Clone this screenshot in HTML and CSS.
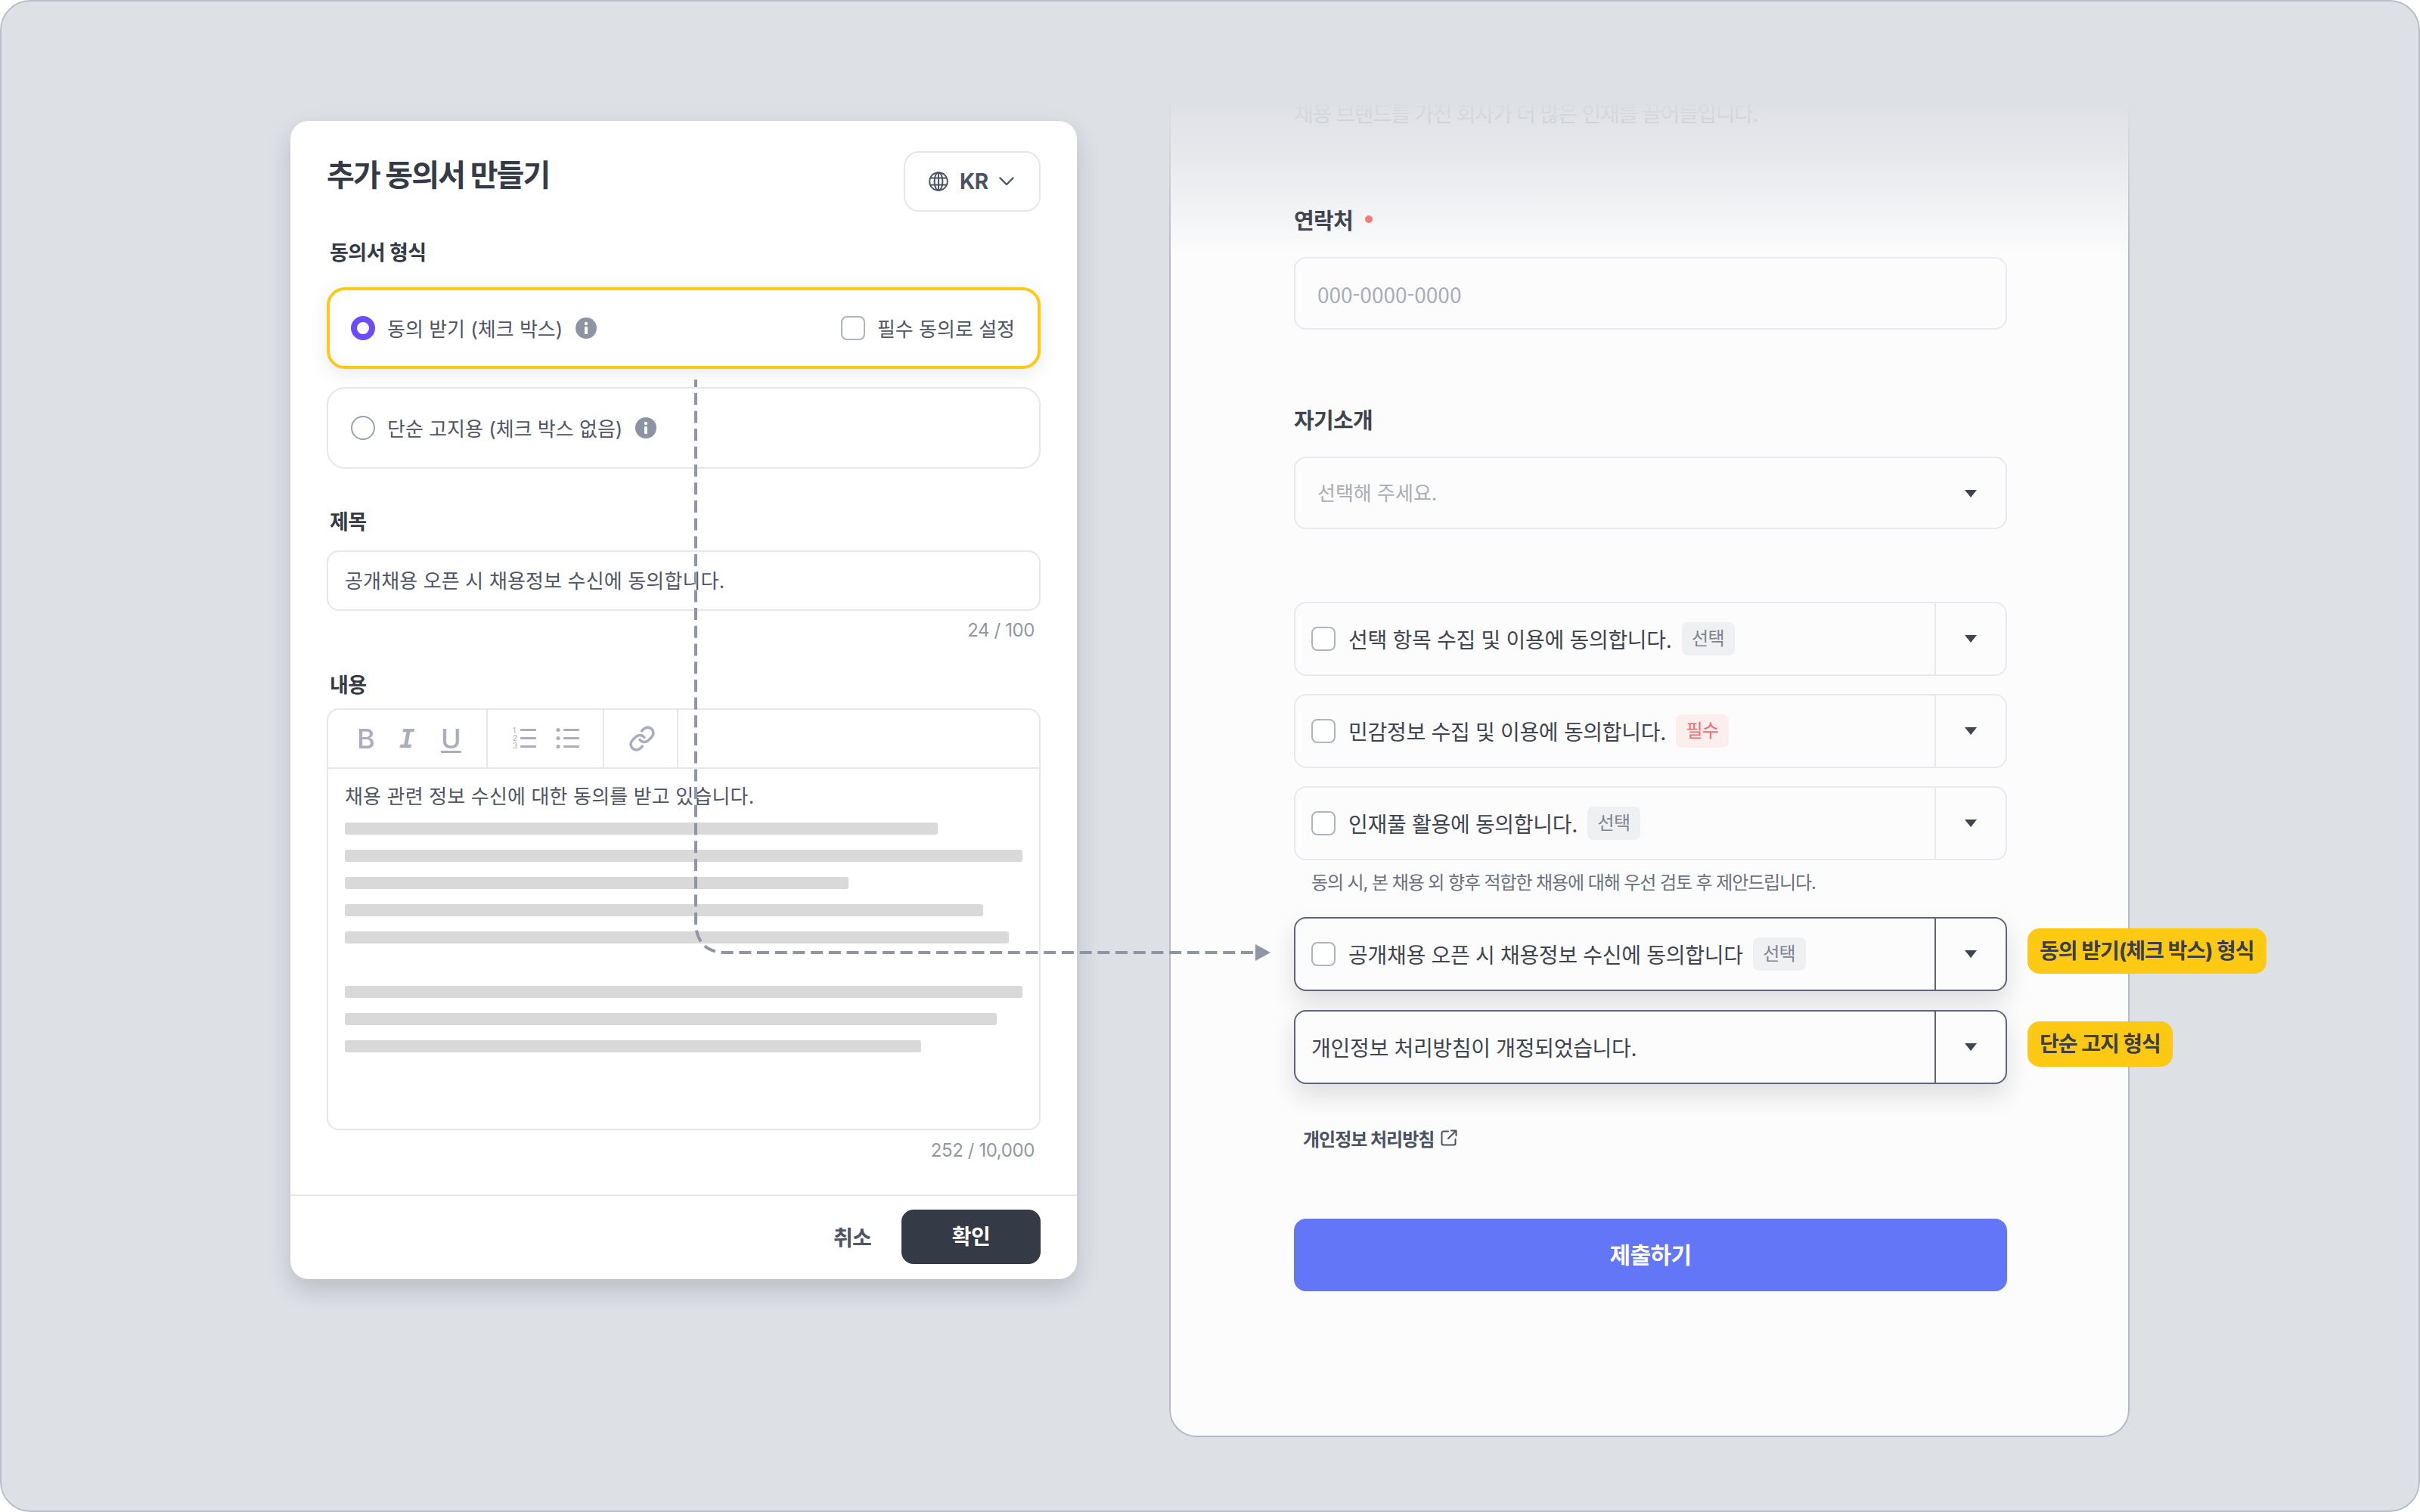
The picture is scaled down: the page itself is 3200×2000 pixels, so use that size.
FILE: index.html
```html
<!DOCTYPE html>
<html lang="ko">

<head>
  <meta charset="UTF-8" />
  <title>추가 동의서 만들기</title>
  <link rel="stylesheet" href="styles.css">
</head>

<body>
  <div class="frame">

    <!-- left: dialog -->
    <div class="dialog">
      <div class="dialog-head">
        <h1 class="dialog-title">추가 동의서 만들기</h1>
        <div class="lang-btn">
          <svg class="globe" viewBox="0 0 26 26" fill="none" stroke="#4b5263" stroke-width="2">
            <circle cx="13" cy="13" r="11.8" />
            <ellipse cx="13" cy="13" rx="5.4" ry="11.8" />
            <path d="M3 8.5h20M3 17.5h20M13 1.2v23.6" />
          </svg>
          <span>KR</span>
          <svg class="chevron" viewBox="0 0 20 12" fill="none" stroke="#4b5263" stroke-width="2.4" stroke-linecap="round" stroke-linejoin="round">
            <path d="M1.5 1.5L10 10l8.5-8.5" />
          </svg>
        </div>
      </div>

      <div class="form-label label-format">동의서 형식</div>
      <div class="option option-active">
        <span class="radio radio-on"></span>
        <span class="option-text">동의 받기 (체크 박스)</span>
        <svg class="info" viewBox="0 0 28 28">
          <circle cx="14" cy="14" r="14" fill="#8c93a3" />
          <circle cx="14" cy="8" r="2.2" fill="#fff" />
          <rect x="12" y="12" width="4" height="10" rx="1" fill="#fff" />
        </svg>
        <span class="option-right">
          <span class="check"></span>
          <span class="option-text">필수 동의로 설정</span>
        </span>
      </div>
      <div class="option">
        <span class="radio"></span>
        <span class="option-text">단순 고지용 (체크 박스 없음)</span>
        <svg class="info" viewBox="0 0 28 28">
          <circle cx="14" cy="14" r="14" fill="#8c93a3" />
          <circle cx="14" cy="8" r="2.2" fill="#fff" />
          <rect x="12" y="12" width="4" height="10" rx="1" fill="#fff" />
        </svg>
      </div>

      <div class="form-label label-title">제목</div>
      <div class="title-input">공개채용 오픈 시 채용정보 수신에 동의합니다.</div>
      <div class="counter counter-title">24 / 100</div>

      <div class="form-label label-body">내용</div>
      <div class="editor">
        <div class="toolbar">
          <div class="tool-group group-text">
            <span class="tool-b">B</span>
            <span class="tool-i">I</span>
            <span class="tool-u">U</span>
          </div>
          <div class="tool-group group-list">
            <svg class="list-icon" viewBox="0 0 32 32" fill="#aaadbb">
              <text x="0" y="9" class="list-num">1</text>
              <text x="0" y="19" class="list-num">2</text>
              <text x="0" y="29" class="list-num">3</text>
              <rect x="10" y="3" width="21" height="3" rx="1" />
              <rect x="10" y="14" width="21" height="3" rx="1" />
              <rect x="10" y="25" width="21" height="3" rx="1" />
            </svg>
            <svg class="list-icon" viewBox="0 0 32 32" fill="#aaadbb">
              <circle cx="3" cy="4.5" r="2.5" />
              <circle cx="3" cy="15.5" r="2.5" />
              <circle cx="3" cy="26.5" r="2.5" />
              <rect x="10" y="3" width="21" height="3" rx="1" />
              <rect x="10" y="14" width="21" height="3" rx="1" />
              <rect x="10" y="25" width="21" height="3" rx="1" />
            </svg>
          </div>
          <div class="tool-group group-link">
            <svg class="link-icon" viewBox="0 0 24 24" fill="none" stroke="#aaadbb" stroke-width="2.4" stroke-linecap="round" stroke-linejoin="round">
              <path d="M10 13a5 5 0 0 0 7.54.54l3-3a5 5 0 0 0-7.07-7.07l-1.72 1.71" />
              <path d="M14 11a5 5 0 0 0-7.54-.54l-3 3a5 5 0 0 0 7.07 7.07l1.71-1.71" />
            </svg>
          </div>
        </div>
        <div class="editor-body">
          <div class="editor-text">채용 관련 정보 수신에 대한 동의를 받고 있습니다.</div>
          <div class="skeleton">
            <div class="line line-784"></div>
            <div class="line"></div>
            <div class="line line-666"></div>
            <div class="line line-844"></div>
            <div class="line line-878"></div>
            <div class="line"></div>
            <div class="line line-862"></div>
            <div class="line line-762"></div>
          </div>
        </div>
      </div>
      <div class="counter counter-body">252 / 10,000</div>

      <div class="dialog-foot">
        <span class="cancel">취소</span>
        <span class="confirm">확인</span>
      </div>
    </div>

    <!-- right: form preview -->
    <div class="preview">
      <div class="preview-fade"></div>
      <div class="preview-intro">채용 브랜드를 가진 회사가 더 많은 인재를 끌어들입니다.</div>

      <div class="field-label field-contact">연락처 <span class="req-dot"></span></div>
      <div class="field-box placeholder field-phone">000-0000-0000</div>

      <div class="field-label field-intro">자기소개</div>
      <div class="field-box placeholder field-select">선택해 주세요.<span class="caret"></span></div>

      <div class="agree-list">
        <div class="agree">
          <div class="agree-main">
            <span class="check"></span>
            <span class="agree-text">선택 항목 수집 및 이용에 동의합니다.</span>
            <span class="badge">선택</span>
          </div>
          <div class="agree-toggle"><span class="caret"></span></div>
        </div>
        <div class="agree">
          <div class="agree-main">
            <span class="check"></span>
            <span class="agree-text">민감정보 수집 및 이용에 동의합니다.</span>
            <span class="badge badge-red">필수</span>
          </div>
          <div class="agree-toggle"><span class="caret"></span></div>
        </div>
        <div class="agree">
          <div class="agree-main">
            <span class="check"></span>
            <span class="agree-text">인재풀 활용에 동의합니다.</span>
            <span class="badge">선택</span>
          </div>
          <div class="agree-toggle"><span class="caret"></span></div>
        </div>
      </div>
      <div class="agree-note">동의 시, 본 채용 외 향후 적합한 채용에 대해 우선 검토 후 제안드립니다.</div>

      <div class="agree agree-new">
        <div class="agree-main">
          <span class="check"></span>
          <span class="agree-text">공개채용 오픈 시 채용정보 수신에 동의합니다</span>
          <span class="badge">선택</span>
        </div>
        <div class="agree-toggle"><span class="caret"></span></div>
        <span class="tag">동의 받기(체크 박스) 형식</span>
      </div>
      <div class="agree agree-new agree-notice">
        <div class="agree-main">
          <span class="agree-text">개인정보 처리방침이 개정되었습니다.</span>
        </div>
        <div class="agree-toggle"><span class="caret"></span></div>
        <span class="tag">단순 고지 형식</span>
      </div>

      <div class="policy-link">개인정보 처리방침
        <svg class="ext-icon" viewBox="0 0 24 24" fill="none" stroke="#4b5263" stroke-width="2" stroke-linecap="round" stroke-linejoin="round">
          <path d="M11 3.5H4.5a2 2 0 0 0-2 2v14a2 2 0 0 0 2 2h14a2 2 0 0 0 2-2V14" />
          <path d="M15 2.5h6.5V9M21.5 2.5L11 13" />
        </svg>
      </div>

      <div class="submit">제출하기</div>
    </div>

    <!-- connector from dialog to the new row -->
    <svg class="connector" viewBox="0 0 3200 2000" fill="none">
      <path d="M920 502V1222Q922 1260 960 1260H1664" stroke="#8f95a3" stroke-width="4" stroke-dasharray="16 7.7" stroke-dashoffset="6" />
      <path d="M1660 1249L1680 1260L1660 1271Z" fill="#8f95a3" />
    </svg>
  </div>
</body>

</html>
```

FILE: styles.css
```css
* {
  box-sizing: border-box;
}

body {
  margin: 0;
  background-color: #fff;
  font-family: Inter, "Noto Sans CJK KR", sans-serif;
  color: #3f4451;
}

.frame {
  position: relative;
  display: flex;
  gap: 122px;
  width: 3200px;
  height: 2000px;
  padding: 118px 0 0 382px;
  background-color: #dde0e5;
  border: 2px solid #b9bec9;
  border-radius: 40px;
  overflow: hidden;
}

/* dialog */
.dialog {
  flex: none;
  width: 1040px;
  height: 1532px;
  margin-top: 40px;
  padding: 40px 48px 0;
  background-color: #fff;
  border-radius: 24px;
  box-shadow: 0 14px 32px rgba(30, 35, 50, 0.18);
}

.dialog-head {
  display: flex;
  justify-content: space-between;
  align-items: flex-start;
}

.dialog-title {
  margin: 4px 0 0;
  font-size: 40px;
  line-height: 56px;
  font-weight: 700;
  letter-spacing: -1.9px;
  color: #343a46;
}

.lang-btn {
  display: flex;
  align-items: center;
  width: 181px;
  height: 80px;
  padding-left: 31px;
  border: 2px solid #e5e7ec;
  border-radius: 20px;
  font-size: 28px;
  font-weight: 700;
  letter-spacing: -0.5px;
  color: #4b5263;
}

.globe {
  width: 26px;
  height: 26px;
  margin-right: 15px;
}

.chevron {
  width: 20px;
  height: 12px;
  margin-left: 14px;
}

.form-label {
  height: 40px;
  margin-left: 4px;
  font-size: 27px;
  line-height: 42px;
  font-weight: 700;
  letter-spacing: -0.5px;
  color: #343a46;
}

.label-format {
  margin-top: 34px;
  margin-bottom: 26px;
}

.label-title {
  margin-top: 50px;
  margin-bottom: 18px;
}

.label-body {
  margin-top: 37px;
  margin-bottom: 11px;
}

.option {
  display: flex;
  align-items: center;
  height: 108px;
  margin-bottom: 24px;
  padding: 0 32px 0 30px;
  background-color: #fff;
  border: 2px solid #e5e7ec;
  border-radius: 24px;
}

.option-active {
  padding: 0 30px 0 28px;
  border: 4px solid #fdc913;
  box-shadow: 0 6px 24px rgba(40, 45, 60, 0.1);
}

.radio {
  flex: none;
  width: 32px;
  height: 32px;
  margin-right: 16px;
  background-color: #fff;
  border: 2px solid #9da1af;
  border-radius: 50%;
}

.radio-on {
  border: 8px solid #6a4dff;
}

.option-text {
  padding-bottom: 2px;
  font-size: 26px;
  color: #4f5566;
}

.info {
  width: 28px;
  height: 28px;
  margin-left: 17px;
}

.option-right {
  display: flex;
  align-items: center;
  gap: 16px;
  margin-left: auto;
}

.check {
  flex: none;
  width: 32px;
  height: 32px;
  background-color: #fff;
  border: 2px solid #b0b3c0;
  border-radius: 8px;
}

.title-input {
  height: 80px;
  padding-left: 22px;
  border: 2px solid #e5e7ec;
  border-radius: 16px;
  font-size: 26px;
  line-height: 78px;
  letter-spacing: 0.15px;
  color: #4f5566;
}

.counter {
  height: 30px;
  padding-right: 8px;
  text-align: right;
  font-size: 24px;
  line-height: 30px;
  letter-spacing: -0.4px;
  color: #9297a5;
}

.counter-title {
  margin-top: 11px;
}

.counter-body {
  margin-top: 12px;
}

.editor {
  height: 558px;
  border: 2px solid #e5e7ec;
  border-radius: 16px;
}

.toolbar {
  display: flex;
  height: 78px;
  border-bottom: 2px solid #e5e7ec;
}

.tool-group {
  display: flex;
  align-items: center;
  height: 100%;
  border-right: 2px solid #e5e7ec;
}

.group-text {
  width: 211px;
  padding-left: 38px;
  font-size: 36px;
  color: #aaadbb;
}

.tool-b,
.tool-i {
  width: 56px;
}

.tool-u {
  width: 55px;
}

.tool-b {
  font-weight: 500;
}

.tool-i {
  font-family: "DejaVu Sans Mono", monospace;
  font-style: italic;
  font-size: 34px;
  font-weight: 700;
}

.tool-u {
  margin-left: -1px;
  text-decoration: underline;
  text-decoration-thickness: 3px;
  text-underline-offset: 3px;
  font-weight: 500;
}

.group-list {
  gap: 25px;
  width: 154px;
  padding-left: 33px;
}

.list-icon {
  width: 32px;
  height: 32px;
}

.list-num {
  font-size: 10px;
}

.group-link {
  width: 98px;
  padding-left: 32px;
}

.link-icon {
  width: 36px;
  height: 36px;
}

.editor-body {
  padding: 17px 22px 0;
}

.editor-text {
  font-size: 26px;
  line-height: 40px;
  letter-spacing: 0.15px;
  color: #4f5566;
}

.skeleton {
  margin-top: 14px;
}

.line {
  height: 16px;
  margin-bottom: 20px;
  background-color: #d9d9d9;
  border-radius: 3px;
}

.line-784 { width: 784px; }
.line-666 { width: 666px; }
.line-844 { width: 844px; }
.line-878 { width: 878px; margin-bottom: 56px; }
.line-862 { width: 862px; }
.line-762 { width: 762px; }

.dialog-foot {
  display: flex;
  justify-content: flex-end;
  align-items: center;
  gap: 40px;
  height: 110px;
  margin: 43px -48px 0;
  padding: 18px 48px 18px;
  border-top: 2px solid #e5e7ec;
}

.cancel {
  font-size: 28px;
  font-weight: 700;
  letter-spacing: -0.8px;
  color: #4f5566;
}

.confirm {
  width: 184px;
  height: 72px;
  background-color: #343a46;
  border-radius: 16px;
  text-align: center;
  font-size: 28px;
  line-height: 73px;
  font-weight: 700;
  letter-spacing: -0.6px;
  color: #fff;
}

/* right card */
.preview {
  position: relative;
  flex: none;
  width: 1270px;
  height: 1781px;
  padding: 11px 160px 0 163px;
  background-color: #fcfcfc;
  border: 2px solid #b5bac6;
  border-top: none;
  border-radius: 0 0 36px 36px;
}

.preview-fade {
  position: absolute;
  top: 0;
  left: -2px;
  right: -2px;
  height: 220px;
  background: linear-gradient(#dde0e5 5%, rgba(221, 224, 229, 0.7) 40%, rgba(221, 224, 229, 0));
}

.preview-intro {
  height: 40px;
  font-size: 28px;
  line-height: 40px;
  letter-spacing: -1.37px;
  color: #6a7080;
}

.field-label {
  position: relative;
  display: flex;
  align-items: center;
  gap: 16px;
  height: 40px;
  margin-bottom: 30px;
  font-size: 29px;
  font-weight: 700;
  letter-spacing: -0.7px;
  color: #3f4451;
}

.field-contact {
  margin-top: 99px;
}

.field-intro {
  margin-top: 98px;
}

.req-dot {
  width: 10px;
  height: 10px;
  background-color: #f57a74;
  border-radius: 50%;
}

.field-box {
  height: 96px;
  padding-left: 29px;
  border: 2px solid #e8e9ef;
  border-radius: 16px;
  font-size: 26px;
  line-height: 92px;
}

.field-phone {
  font-family: "Noto Sans CJK KR", sans-serif;
  font-size: 28px;
  line-height: 94px;
}

.placeholder {
  color: #a9adba;
}

.field-select {
  display: flex;
  align-items: center;
  justify-content: space-between;
  padding-top: 2px;
  padding-right: 38px;
}

.caret {
  flex: none;
  width: 0;
  height: 0;
  border-left: 8px solid transparent;
  border-right: 8px solid transparent;
  border-top: 10px solid #3f4451;
}

.agree-list {
  display: flex;
  flex-direction: column;
  gap: 24px;
  margin-top: 96px;
}

.agree {
  position: relative;
  display: flex;
  height: 98px;
  background-color: #fcfcfc;
  border: 2px solid #e8e9ef;
  border-radius: 16px;
}

.agree-main {
  flex: 1;
  display: flex;
  align-items: center;
  padding-left: 21px;
}

.agree-main .check {
  margin-right: 17px;
}

.agree-text {
  font-size: 28px;
  letter-spacing: -0.3px;
  color: #3f4451;
}

.badge {
  width: 70px;
  height: 44px;
  margin-left: 13px;
  background-color: #eff0f2;
  border-radius: 8px;
  text-align: center;
  font-size: 24px;
  line-height: 44px;
  letter-spacing: -0.6px;
  color: #7e8391;
}

.badge-red {
  background-color: #fdeeee;
  color: #f56b6b;
}

.agree-toggle {
  display: flex;
  align-items: center;
  justify-content: center;
  flex: none;
  width: 94px;
  border-left: 2px solid #e8e9ef;
}

.agree-note {
  height: 34px;
  margin: 13px 0 28px 23px;
  font-size: 24px;
  line-height: 34px;
  letter-spacing: -1.1px;
  color: #6a7080;
}

.agree-new {
  border-color: #5e6478;
  box-shadow: 0 16px 32px rgba(40, 45, 60, 0.14);
}

.agree-new .agree-toggle {
  border-left-color: #5e6478;
}

.agree-notice {
  margin-top: 25px;
}

.tag {
  position: absolute;
  top: 13px;
  left: calc(100% + 29px);
  height: 60px;
  padding: 0 16px;
  background-color: #fdc913;
  border-radius: 16px;
  font-size: 28px;
  line-height: 60px;
  font-weight: 700;
  letter-spacing: -1px;
  white-space: nowrap;
  color: #3a3f4a;
}

.policy-link {
  display: flex;
  align-items: center;
  gap: 8px;
  height: 40px;
  margin: 51px 0 0 12px;
  font-size: 24px;
  font-weight: 700;
  letter-spacing: -1px;
  color: #4b5263;
}

.ext-icon {
  width: 24px;
  height: 24px;
}

.submit {
  height: 96px;
  margin-top: 87px;
  background-color: #6376f7;
  border-radius: 16px;
  text-align: center;
  font-size: 30px;
  line-height: 96px;
  font-weight: 700;
  letter-spacing: -0.6px;
  color: #fff;
}

.connector {
  position: absolute;
  top: -2px;
  left: -2px;
  width: 3200px;
  height: 2000px;
  pointer-events: none;
}
```
